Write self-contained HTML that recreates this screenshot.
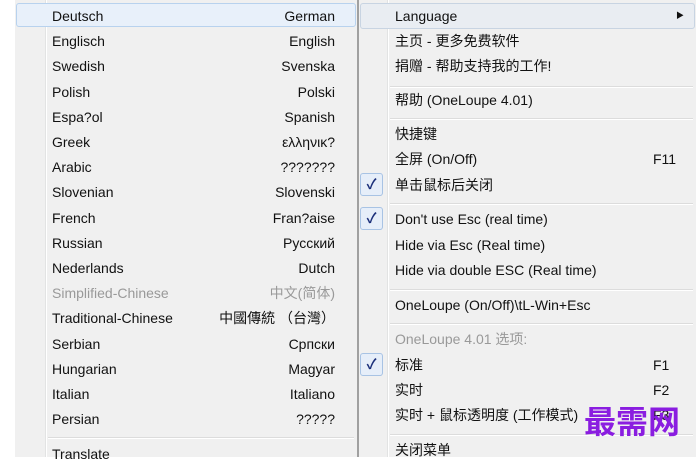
<!DOCTYPE html><html><head><meta charset="utf-8"><style>
body{margin:0;width:696px;height:457px;overflow:hidden;background:#fff;font-family:"Liberation Sans","Noto Sans CJK SC",sans-serif;font-size:14px;color:#111;position:relative}
.m{position:absolute;top:0;height:457px;background:#f0f0f0}
.g{position:absolute;top:0;height:457px;width:1px;background:#e2e3e3;border-right:1px solid #fff}
.t{position:absolute;white-space:nowrap;line-height:16px}
.r{text-align:right}
.s{position:absolute;height:1px;background:#dcdcdc;border-bottom:1px solid #fff}
.gr{color:#999}
.ck{position:absolute;width:21px;height:21px;border:1px solid #a8c3e4;border-radius:3px;background:#e6eef9;color:#1b2f7a;font-size:14px;font-weight:bold;text-align:center;line-height:21px}
</style></head><body>
<div class="m" style="left:15px;width:342px"></div>
<div class="g" style="left:45px"></div>
<div style="position:absolute;left:16px;top:3px;width:338px;height:22px;border:1px solid #b8d2ee;border-radius:3px;background:#e8f0fa"></div>
<div style="position:absolute;left:357px;top:0;width:2px;height:457px;background:#a0a0a0"></div>
<div class="m" style="left:359px;width:337px"></div>
<div class="g" style="left:387px"></div>
<div style="position:absolute;left:360px;top:3px;width:333px;height:24px;border:1px solid #c8d4e2;border-radius:3px;background:#e9edf2"></div>
<div class="t" style="left:676px;top:8px;font-size:8px">▶</div>
<div id="L"></div>
<script>
var L=[["Deutsch","German"],["Englisch","English"],["Swedish","Svenska"],["Polish","Polski"],["Espa?ol","Spanish"],["Greek","ελληνικ?"],["Arabic","???????"],["Slovenian","Slovenski"],["French","Fran?aise"],["Russian","Русский"],["Nederlands","Dutch"],["Simplified-Chinese","中文(简体)",1],["Traditional-Chinese","中國傳統 （台灣）"],["Serbian","Српски"],["Hungarian","Magyar"],["Italian","Italiano"],["Persian","?????"]];
var h="";
L.forEach(function(a,i){var y=8+i*25.2;var c=a[2]?" gr":"";h+='<div class="t'+c+'" style="left:52px;top:'+y+'px">'+a[0]+'</div><div class="t r'+c+'" style="right:361px;top:'+y+'px">'+a[1]+'</div>';});
h+='<div class="s" style="left:48px;width:306px;top:437px"></div><div class="t" style="left:52px;top:446px">Translate</div>';
var R=[["Language",16],["主页 - 更多免费软件",41],["捐赠 - 帮助支持我的工作!",66],["帮助 (OneLoupe 4.01)",100],["快捷键",134],["全屏 (On/Off)",159,"F11"],["单击鼠标后关闭",185,0,1],["Don't use Esc (real time)",219,0,1],["Hide via Esc (Real time)",245],["Hide via double ESC (Real time)",270],["OneLoupe (On/Off)\\tL-Win+Esc",305],["OneLoupe 4.01 选项:",339,0,0,1],["标准",365,"F1",1],["实时",390,"F2"],["实时 + 鼠标透明度 (工作模式)",415,"F3"],["关闭菜单",450]];
R.forEach(function(a){var y=a[1]-8;h+='<div class="t'+(a[4]?" gr":"")+'" style="left:395px;top:'+y+'px">'+a[0]+'</div>';if(a[2])h+='<div class="t" style="left:653px;top:'+y+'px">'+a[2]+'</div>';if(a[3])h+='<div class="ck" style="left:360px;top:'+(a[1]-12)+'px">✓</div>';});
[86,118,203,289,323,434].forEach(function(y){h+='<div class="s" style="left:390px;width:303px;top:'+y+'px"></div>';});
document.getElementById("L").innerHTML=h;
</script>
<div class="t" style="left:584px;top:402px;font-size:32px;line-height:36px;color:#8a1de0;font-family:'Noto Sans CJK SC',sans-serif;font-weight:bold">最需网</div>
</body></html>
